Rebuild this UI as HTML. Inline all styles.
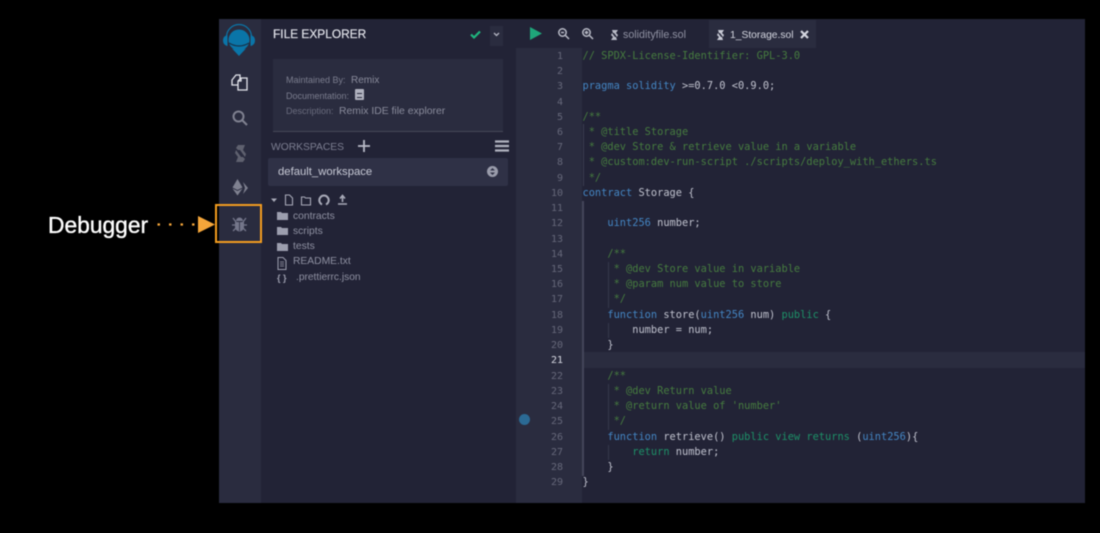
<!DOCTYPE html>
<html><head><meta charset="utf-8"><style>
html,body{margin:0;padding:0;background:#000;width:1100px;height:533px;overflow:hidden}
body{position:relative;font-family:"Liberation Sans",sans-serif}
#w{position:absolute;left:0;top:0;width:1100px;height:533px;filter:blur(.45px)}
.a{position:absolute}
.t{position:absolute;white-space:nowrap;line-height:14px}
.l{position:absolute;left:582.500px;margin-top:1px;font:10.330px/15px "DejaVu Sans Mono","Liberation Mono",monospace;white-space:pre;color:#c0c2ce}
.n{position:absolute;left:540px;width:23px;margin-top:1px;text-align:right;font:10px/15px "DejaVu Sans Mono",monospace;color:#66687a}
.c{color:#467c3f}.k{color:#4486c4}.g{color:#1d9168}
svg{position:absolute;overflow:visible}
</style></head><body><div id="w">
<div class="a" style="left:219px;top:19px;width:866px;height:484px;background:#222336"></div>
<div class="a" style="left:219px;top:19px;width:42px;height:484px;background:#2a2c3f"></div>
<div class="a" style="left:516px;top:19px;width:66px;height:484px;background:#2a2c3f"></div>
<div class="a" style="left:516px;top:19px;width:569px;height:29px;background:#222336"></div>
<div class="a" style="left:709px;top:20px;width:107px;height:28px;background:#2a2c3f"></div>
<div class="a" style="left:583px;top:352px;width:502px;height:16px;background:#2a2c3f"></div>

<svg style="left:222px;top:27px" width="34" height="30" viewBox="0 0 34 30"><path d="M5.500 8q-4.500 1-4.500 5.500T5.500 19zM28.500 8q4.500 1 4.500 5.500T28.500 19z" fill="#0a75a8"/><path d="M4.500 10a12.500 12.500 0 0 1 25 0" fill="none" stroke="#0a75a8" stroke-width="1.200"/><circle cx="17" cy="13" r="10.500" fill="#0a75a8"/><path d="M7 16q10 6 20 0" fill="none" stroke="#17344c" stroke-width="1.200"/><path d="M10 21.500q7 2.500 14 0l-7 7.500z" fill="#0a75a8"/></svg>
<svg style="left:231px;top:74px" width="17" height="18" viewBox="0 0 17 18" fill="none" stroke="#e4e5ec" stroke-width="1.300"><path d="M1 6l4-5h4v10H1z"/><path d="M7 7l3-3h6v12H7z" fill="#2a2c3f"/><path d="M10 4v3H7"/></svg>
<svg style="left:232px;top:110px" width="16" height="16" viewBox="0 0 16 16" fill="none" stroke="#7f8190" stroke-width="2"><circle cx="6.500" cy="6.500" r="5"/><path d="M10 10l5 5"/></svg>
<svg style="left:235px;top:145px" width="11" height="17" viewBox="0 0 11 17" fill="#5f616f"><path d="M3 0h7L8 5H3L1 3z"/><path d="M8 17H1l2-5h5l2 2z"/><path d="M1 5l5 7H3L0 8zM10 12L5 5h3l3 4z"/></svg>
<svg style="left:231px;top:179px" width="17" height="18" viewBox="0 0 17 18" fill="#7f8190"><path d="M6.500 0l5 8.500-5 2.500-5-2.500z"/><path d="M1.500 9.500l5 2.500 5-2.500-5 7z"/><path d="M12 3l5 6-5 6 2-6z"/></svg>
<svg style="left:232px;top:215px" width="15" height="17" viewBox="0 0 15 17" fill="#74768a"><path d="M3 7h9v5a4.500 4.500 0 0 1-9 0z"/><path d="M4 6a3.500 3.500 0 0 1 7 0z"/><path d="M1 3l3 4M14 3l-3 4M0 10h3M15 10h-3M1 16l3-3M14 16l-3-3" stroke="#74768a" stroke-width="1.300"/><path d="M7.500 7v9" stroke="#2a2c3f" stroke-width=".8"/></svg>

<div class="a" style="left:215px;top:204px;width:43px;height:35px;border:2px solid #f39c1f"></div>
<div class="t" style="left:48px;top:213px;font:22.800px/24px 'Liberation Sans',sans-serif;color:#fff;-webkit-text-stroke:.35px #fff">Debugger</div>
<svg style="left:155px;top:215px" width="62" height="20"><path d="M2.500 9.500H40" stroke="#f5a63a" stroke-width="2.200" stroke-dasharray="2.500 9"/><path d="M43 1l17 8.500-17 8.500z" fill="#f5a63a"/></svg>

<div class="t" style="left:273px;top:27px;font-size:11.900px;color:#e2e3ea;-webkit-text-stroke:.2px #e2e3ea">FILE EXPLORER</div>
<svg style="left:470px;top:30px" width="11" height="9"><path d="M1 4.500l3 3 6-6" fill="none" stroke="#1fb57e" stroke-width="2.200"/></svg>
<div class="a" style="left:490px;top:26px;width:13px;height:20px;background:#2a2c3f"></div>
<svg style="left:493px;top:32px" width="7" height="5"><path d="M1 1l2.500 2.500L6 1" fill="none" stroke="#b5b7c4" stroke-width="1.300"/></svg>
<div class="a" style="left:273px;top:59px;width:230px;height:72px;background:#2a2c3f;border-bottom:1px solid #454757"></div>
<div class="t" style="left:286px;top:73px;font-size:9px;color:#7b7d8e">Maintained By:</div>
<div class="t" style="left:351px;top:73px;margin-top:.5px;font-size:10px;color:#8a8c9c">Remix</div>
<div class="t" style="left:286px;top:89px;font-size:9px;color:#7b7d8e">Documentation:</div>
<div class="a" style="left:355px;top:89px;width:9px;height:11px;background:#b0b2bf;border-radius:1px"></div>
<div class="a" style="left:357px;top:93px;width:5px;height:1px;background:#2a2c3f"></div>
<div class="a" style="left:357px;top:97px;width:5px;height:1px;background:#2a2c3f"></div>
<div class="t" style="left:286px;top:104px;font-size:9px;color:#6a6c7e">Description:</div>
<div class="t" style="left:339px;top:104px;margin-top:.5px;font-size:10.400px;color:#8a8c9c">Remix IDE file explorer</div>

<div class="t" style="left:271px;top:141px;font-size:10.300px;color:#7d7f92">WORKSPACES</div>
<svg style="left:358px;top:140px" width="12" height="12"><path d="M6 0v12M0 6h12" stroke="#b9bbc8" stroke-width="1.800"/></svg>
<svg style="left:495px;top:140px" width="14" height="12"><path d="M0 1.500h14M0 6h14M0 10.500h14" stroke="#b0b2bf" stroke-width="2.200"/></svg>
<div class="a" style="left:268px;top:158px;width:240px;height:28px;background:#2f3146;border-radius:2px"></div>
<div class="t" style="left:278px;top:165px;font-size:11.300px;color:#c8cad6">default_workspace</div>
<div class="a" style="left:487px;top:166px;width:11px;height:11px;border-radius:6px;background:#9a9cab"></div>
<svg style="left:489px;top:167px" width="7" height="9"><path d="M3.500 1L6 3.500H1zM3.500 8L6 5.500H1z" fill="#2f3146"/></svg>

<svg style="left:270px;top:194px" width="90" height="12" fill="none" stroke="#a8aab8" stroke-width="1.100"><path d="M1 4.500h6L4 8z" fill="#a8aab8" stroke="none"/><path d="M15.500 1h4l3 3v7h-7z"/><path d="M31.500 3h3l1 1h5v7h-9z"/><path d="M52 10.500a4.700 4.700 0 1 1 4 0" stroke-width="2"/><path d="M68 10h9M72.500 8V2M70 4.500l2.500-3 2.500 3" stroke-width="1.600"/></svg>
<svg style="left:277px;top:212px" width="11" height="72" fill="#9c9eae"><path d="M0 0h4l1 1h6v7H0zM0 15h4l1 1h6v7H0zM0 31h4l1 1h6v7H0z"/><path d="M1 45.500h5l3 3v9H1z" fill="none" stroke="#9c9eae"/><path d="M3 50h4M3 52h4M3 54h4" stroke="#9c9eae" stroke-width=".8"/></svg>
<div class="t" style="left:277px;top:271px;font-size:9px;color:#9c9eae;font-weight:bold">{ }</div>
<div class="t" style="left:293px;top:209px;font-size:10.300px;color:#8f91a2;margin-top:0.500px">contracts</div>
<div class="t" style="left:293px;top:224px;font-size:10.300px;color:#8f91a2;margin-top:0.500px">scripts</div>
<div class="t" style="left:293px;top:239px;font-size:10.300px;color:#8f91a2;margin-top:0.500px">tests</div>
<div class="t" style="left:293px;top:254px;font-size:10.300px;color:#8f91a2;margin-top:1px">README.txt</div>
<div class="t" style="left:296px;top:271px;font-size:10.200px;color:#8f91a2">.prettierrc.json</div>

<svg style="left:530px;top:27px" width="12" height="13"><path d="M0 0l12 6.500L0 13z" fill="#1fa67a"/></svg>
<svg style="left:558px;top:28px" width="11" height="11" fill="none" stroke="#b8bac6" stroke-width="1.500"><circle cx="4.500" cy="4.500" r="3.700"/><path d="M7.500 7.500L11 11M3 4.500h3"/></svg>
<svg style="left:582px;top:28px" width="11" height="11" fill="none" stroke="#b8bac6" stroke-width="1.500"><circle cx="4.500" cy="4.500" r="3.700"/><path d="M7.500 7.500L11 11M2.700 4.500h3.600M4.500 2.700v3.600"/></svg>
<svg style="left:611px;top:30px" width="7" height="10" fill="#b8bac6"><path d="M1 0h6L5 3H2zM6 10H0l2-3h3z"/><path d="M1 3l3 4H2L0 5zM6 7L3 3h2l2 2z"/></svg>
<div class="t" style="left:623px;top:28px;font-size:10.700px;color:#8f91a2">solidityfile.sol</div>
<svg style="left:717px;top:30px" width="7" height="10" fill="#c8cad6"><path d="M1 0h6L5 3H2zM6 10H0l2-3h3z"/><path d="M1 3l3 4H2L0 5zM6 7L3 3h2l2 2z"/></svg>
<div class="t" style="left:730px;top:28px;font-size:10.300px;color:#d4d6e0;margin-top:.5px">1_Storage.sol</div>
<svg style="left:800px;top:30px" width="9" height="9"><path d="M1 1l7 7M8 1L1 8" stroke="#d4d6e0" stroke-width="2.200"/></svg>

<div class="a" style="left:582px;top:201px;width:2px;height:275px;background:#44465a"></div>
<div class="a" style="left:583px;top:124px;width:1px;height:62px;background:#3a3c50"></div>
<div class="a" style="left:608px;top:262px;width:1px;height:46px;background:#35374a"></div>
<div class="a" style="left:608px;top:384px;width:1px;height:46px;background:#35374a"></div>
<div class="a" style="left:608px;top:323px;width:1px;height:15px;background:#35374a"></div>
<div class="a" style="left:608px;top:445px;width:1px;height:15px;background:#35374a"></div>
<div class="a" style="left:519px;top:414px;width:11px;height:11px;border-radius:6px;background:#2b6a94"></div>

<div class="n" style="top:48px">1</div><div class="n" style="top:63px">2</div><div class="n" style="top:78px">3</div><div class="n" style="top:94px">4</div><div class="n" style="top:109px">5</div><div class="n" style="top:124px">6</div><div class="n" style="top:139px">7</div><div class="n" style="top:154px">8</div><div class="n" style="top:170px">9</div><div class="n" style="top:185px">10</div><div class="n" style="top:200px">11</div><div class="n" style="top:215px">12</div><div class="n" style="top:231px">13</div><div class="n" style="top:246px">14</div><div class="n" style="top:261px">15</div><div class="n" style="top:276px">16</div><div class="n" style="top:291px">17</div><div class="n" style="top:307px">18</div><div class="n" style="top:322px">19</div><div class="n" style="top:337px">20</div><div class="n" style="top:352px;color:#d8dae4">21</div><div class="n" style="top:368px">22</div><div class="n" style="top:383px">23</div><div class="n" style="top:398px">24</div><div class="n" style="top:413px">25</div><div class="n" style="top:429px">26</div><div class="n" style="top:444px">27</div><div class="n" style="top:459px">28</div><div class="n" style="top:474px">29</div>

<div class="l c" style="top:48px">// SPDX-License-Identifier: GPL-3.0</div>
<div class="l" style="top:78px"><span class="k">pragma solidity</span> &gt;=0.7.0 &lt;0.9.0;</div>
<div class="l c" style="top:109px">/**</div>
<div class="l c" style="top:124px"> * @title Storage</div>
<div class="l c" style="top:139px"> * @dev Store &amp; retrieve value in a variable</div>
<div class="l c" style="top:154px"> * @custom:dev-run-script ./scripts/deploy_with_ethers.ts</div>
<div class="l c" style="top:170px"> */</div>
<div class="l" style="top:185px"><span class="k">contract</span> Storage {</div>
<div class="l" style="top:215px">    <span class="k">uint256</span> number;</div>
<div class="l c" style="top:246px">    /**</div>
<div class="l c" style="top:261px">     * @dev Store value in variable</div>
<div class="l c" style="top:276px">     * @param num value to store</div>
<div class="l c" style="top:291px">     */</div>
<div class="l" style="top:307px">    <span class="k">function</span> store(<span class="k">uint256</span> num) <span class="g">public</span> {</div>
<div class="l" style="top:322px">        number = num;</div>
<div class="l" style="top:337px">    }</div>
<div class="l c" style="top:368px">    /**</div>
<div class="l c" style="top:383px">     * @dev Return value</div>
<div class="l c" style="top:398px">     * @return value of 'number'</div>
<div class="l c" style="top:413px">     */</div>
<div class="l" style="top:429px">    <span class="k">function</span> retrieve() <span class="g">public view returns</span> (<span class="k">uint256</span>){</div>
<div class="l" style="top:444px">        <span class="g">return</span> number;</div>
<div class="l" style="top:459px">    }</div>
<div class="l" style="top:474px">}</div>
</div></body></html>
